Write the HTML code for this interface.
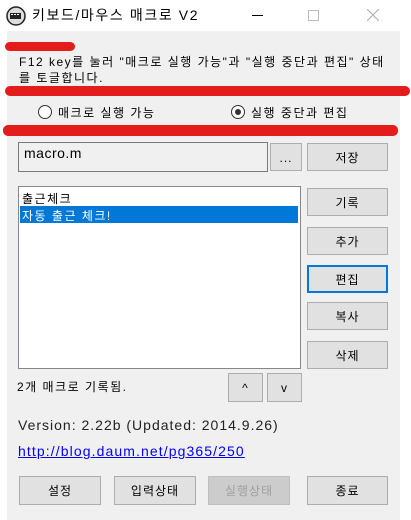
<!DOCTYPE html>
<html><head><meta charset="utf-8"><style>
*{box-sizing:border-box;margin:0;padding:0}
body{width:411px;height:520px;background:#fff;position:relative;overflow:hidden;font-family:"Liberation Sans","Noto Sans CJK KR",sans-serif;font-size:12px;color:#000;letter-spacing:1.5px}
.a{position:absolute}
.client{left:7px;top:31px;width:393px;height:489px;background:#f0f0f0}
.btn{position:absolute;background:#e1e1e1;border:1px solid #adadad;display:flex;align-items:center;justify-content:center;font-size:12px;letter-spacing:1px}
.red{position:absolute;background:#e31c1c;border-radius:5px}
.t{position:absolute;white-space:nowrap}
</style></head><body>
<div class="a client"></div>
<svg class="a" style="left:6px;top:6px" width="20" height="20" viewBox="0 0 20 20"><circle cx="10" cy="10" r="9" fill="#ddd" stroke="#222" stroke-width="1.5"/><rect x="4" y="7" width="11" height="6" fill="#222"/><rect x="5" y="8" width="2" height="1" fill="#fff"/><rect x="8" y="8" width="2" height="1" fill="#fff"/><rect x="11" y="8" width="2" height="1" fill="#fff"/></svg>
<div class="t" style="left:32px;top:5px;font-size:14px;letter-spacing:1.6px">키보드/마우스 매크로 V2</div>
<div class="a" style="left:252px;top:15px;width:11px;height:1px;background:#000"></div>
<div class="a" style="left:308px;top:10px;width:11px;height:11px;border:1px solid #bbb"></div>
<svg class="a" style="left:367px;top:9px" width="12" height="12"><path d="M0 0L12 12M12 0L0 12" stroke="#aaa" stroke-width="1"/></svg>
<div class="red" style="left:5px;top:42px;width:70px;height:9px"></div>
<div class="t" style="left:19px;top:53px">F12 key를 눌러 "매크로 실행 가능"과 "실행 중단과 편집" 상태</div>
<div class="t" style="left:19px;top:69px">를 토글합니다.</div>
<div class="red" style="left:5px;top:86px;width:405px;height:10px"></div>
<div class="a" style="left:38px;top:105px;width:14px;height:14px;border:1px solid #333;border-radius:50%;background:#fff"></div>
<div class="t" style="left:58px;top:104px">매크로 실행 가능</div>
<div class="a" style="left:231px;top:105px;width:14px;height:14px;border:1px solid #333;border-radius:50%;background:#fff"></div>
<div class="a" style="left:235px;top:109px;width:6px;height:6px;border-radius:50%;background:#333"></div>
<div class="t" style="left:251px;top:104px">실행 중단과 편집</div>
<div class="red" style="left:3px;top:125px;width:395px;height:11px"></div>
<div class="a" style="left:18px;top:142px;width:250px;height:30px;border:1px solid #7a7a7a;background:#f0f0f0"></div>
<div class="t" style="left:24px;top:145px;font-size:14px;letter-spacing:0.5px">macro.m</div>
<div class="btn" style="left:270px;top:143px;width:32px;height:28px;align-items:flex-end;padding-bottom:5px">...</div>
<div class="btn" style="left:307px;top:143px;width:81px;height:28px">저장</div>
<div class="a" style="left:18px;top:186px;width:283px;height:183px;border:1px solid #828790;background:#fff"></div>
<div class="t" style="left:22px;top:190px">출근체크</div>
<div class="a" style="left:20px;top:206px;width:278px;height:17px;background:#0078d7"></div>
<div class="t" style="left:22px;top:207px;color:#fff">자동 출근 체크!</div>
<div class="btn" style="left:307px;top:188px;width:81px;height:28px">기록</div>
<div class="btn" style="left:307px;top:227px;width:81px;height:28px">추가</div>
<div class="btn" style="left:307px;top:265px;width:81px;height:28px;border:2px solid #0078d7">편집</div>
<div class="btn" style="left:307px;top:302px;width:81px;height:28px">복사</div>
<div class="btn" style="left:307px;top:341px;width:81px;height:28px">삭제</div>
<div class="t" style="left:17px;top:378px">2개 매크로 기록됨.</div>
<div class="btn" style="left:228px;top:373px;width:35px;height:29px">^</div>
<div class="btn" style="left:267px;top:373px;width:35px;height:29px">v</div>
<div class="t" style="left:18px;top:417px;font-size:14px;color:#222;letter-spacing:1px">Version: 2.22b (Updated: 2014.9.26)</div>
<div class="t" style="left:18px;top:443px;font-size:14px;color:#0000ff;text-decoration:underline;letter-spacing:1.1px">http://blog.daum.net/pg365/250</div>
<div class="btn" style="left:19px;top:476px;width:82px;height:29px">설정</div>
<div class="btn" style="left:114px;top:476px;width:82px;height:29px">입력상태</div>
<div class="btn" style="left:208px;top:476px;width:82px;height:29px;background:#ccc;border-color:#bfbfbf;color:#a0a0a0">실행상태</div>
<div class="btn" style="left:307px;top:476px;width:81px;height:29px">종료</div>
</body></html>
